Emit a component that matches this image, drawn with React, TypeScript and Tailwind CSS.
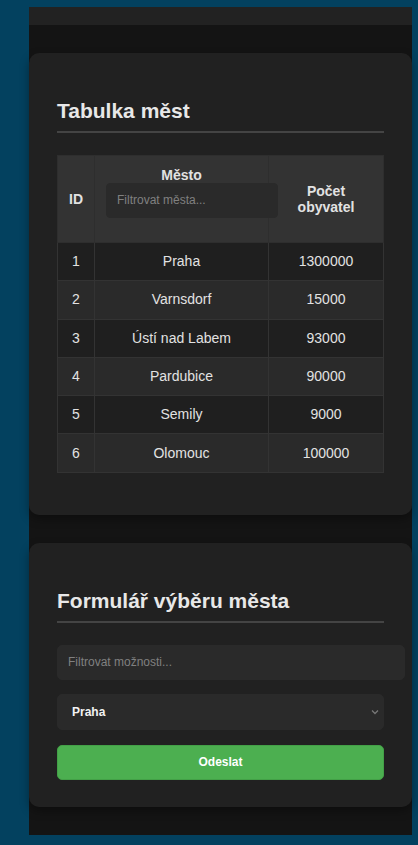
import { useState } from "react";

type City = { id: number; name: string; population: number };

const cities: City[] = [
  { id: 1, name: "Praha", population: 1300000 },
  { id: 2, name: "Varnsdorf", population: 15000 },
  { id: 3, name: "Ústí nad Labem", population: 93000 },
  { id: 4, name: "Pardubice", population: 90000 },
  { id: 5, name: "Semily", population: 9000 },
  { id: 6, name: "Olomouc", population: 100000 },
];

export default function App() {
  const [filter, setFilter] = useState("");
  const [optionFilter, setOptionFilter] = useState("");
  const [selected, setSelected] = useState("Praha");

  const rows = cities.filter((c) => c.name.toLowerCase().includes(filter.toLowerCase()));
  const options = cities.filter((c) => c.name.toLowerCase().includes(optionFilter.toLowerCase()));

  return (
    <div className="min-h-screen bg-[#03415f] pt-[7px] pl-[29px] pb-[10px] font-['Liberation_Sans',Arial,sans-serif]">
      <div className="w-[383px] bg-[#141414] pb-[28px]">
        <div className="h-[18px] bg-[#222]" />

        {/* tabulka */}
        <section className="mt-[28px] rounded-[10px] bg-[#212121] px-7 pt-[46px] pb-[42px] shadow-[0_4px_10px_rgba(0,0,0,0.35)]">
          <h2 className="border-b-2 border-[#444] pb-2 text-[21px] font-bold leading-[24px] text-[#e8e8e8]">
            Tabulka měst
          </h2>
          <table className="mt-[22px] w-[326px] table-fixed border-collapse text-[14px] text-[#e2e2e2]">
            <colgroup>
              <col className="w-[37px]" />
              <col className="w-[174px]" />
              <col className="w-[115px]" />
            </colgroup>
            <thead>
              <tr className="h-[87px] bg-[#333]">
                <th className="border border-[#2e2e2e] px-2 align-middle font-bold leading-[16px]">ID</th>
                <th className="border border-[#2e2e2e] px-3 text-center align-middle font-bold leading-[16px]">
                  <div>Město</div>
                  <input
                    value={filter}
                    onChange={(e) => setFilter(e.target.value)}
                    placeholder="Filtrovat města..."
                    className="relative -ml-px mb-[14px] block h-[35px] w-[172px] rounded-[4px] border border-[#2a2a2a] bg-[#2a2a2a] px-[10px] text-left text-[12px] font-normal text-[#ddd] outline-none placeholder:text-[#808080]"
                  />
                </th>
                <th className="border border-[#2e2e2e] px-3 align-middle font-bold leading-[16px]">Počet obyvatel</th>
              </tr>
            </thead>
            <tbody>
              {rows.map((c, i) => (
                <tr key={c.id} className={i % 2 === 0 ? "h-[38.3px] bg-[#1f1f1f]" : "h-[38.3px] bg-[#2a2a2a]"}>
                  <td className="border border-[#333] text-center">{c.id}</td>
                  <td className="border border-[#333] text-center">{c.name}</td>
                  <td className="border border-[#333] text-center">{c.population}</td>
                </tr>
              ))}
            </tbody>
          </table>
        </section>

        {/* formulář */}
        <section className="mt-[28px] rounded-[10px] bg-[#212121] px-7 pt-[46px] pb-[27px] shadow-[0_4px_10px_rgba(0,0,0,0.35)]">
          <h2 className="border-b-2 border-[#444] pb-2 text-[21px] font-bold leading-[24px] text-[#e8e8e8]">
            Formulář výběru města
          </h2>
          <form className="mt-[22px] flex flex-col" onSubmit={(e) => e.preventDefault()}>
            <input
              value={optionFilter}
              onChange={(e) => setOptionFilter(e.target.value)}
              placeholder="Filtrovat možnosti..."
              className="h-[35px] w-[348px] rounded-[5px] border border-[#2a2a2a] bg-[#2a2a2a] px-[10px] text-[12px] text-[#ddd] outline-none placeholder:text-[#808080]"
            />
            <div className="relative mt-[14px]">
              <select
                value={selected}
                onChange={(e) => setSelected(e.target.value)}
                className="h-[36px] w-full appearance-none rounded-[5px] border border-[#2a2a2a] bg-[#2a2a2a] pl-[14px] text-[12px] font-bold text-[#f2f2f2] outline-none"
              >
                {options.map((c) => (
                  <option key={c.id} value={c.name}>
                    {c.name}
                  </option>
                ))}
              </select>
              <svg
                className="pointer-events-none absolute right-[5px] top-[15px] h-[6px] w-[8px]"
                viewBox="0 0 8 6"
                fill="none"
                stroke="#777"
                strokeWidth="1.3"
              >
                <path d="M1 1.5l3 3 3-3" />
              </svg>
            </div>
            <button
              type="submit"
              className="mt-[15px] h-[35px] w-full rounded-[5px] border border-[#43a047] bg-[#4caf50] text-[12px] font-bold text-white"
            >
              Odeslat
            </button>
          </form>
        </section>
      </div>
    </div>
  );
}
